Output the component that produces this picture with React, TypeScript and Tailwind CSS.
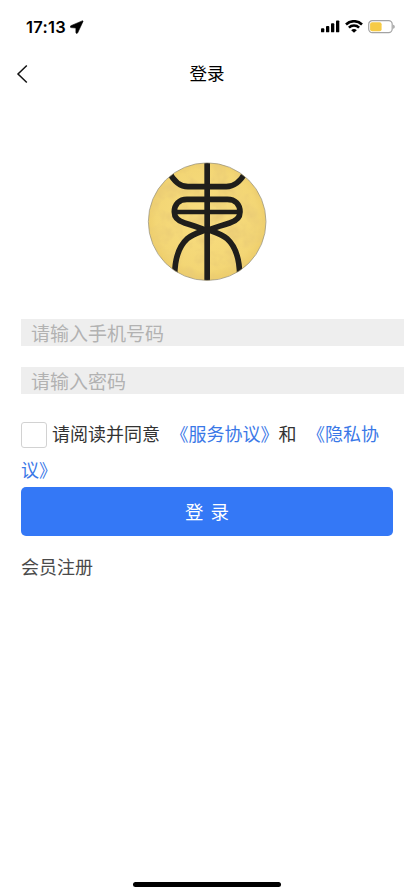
import React from "react";

function StatusBar() {
  return (
    <div className="flex h-[52px] items-center justify-between pl-[26px] pr-[18px] pt-[1px]">
      <div className="flex items-center gap-[4px]">
        <span className="w-[40px] whitespace-nowrap font-['Inter','Liberation_Sans',sans-serif] text-[16.500px] font-semibold leading-5 tracking-[0.300px] text-black">17:13</span>
        <svg width="14" height="14" viewBox="0 0 14 14" className="block">
          <path d="M12.200 0.900 0.900 5.700C-.1 6.200.1 7.500 1.100 7.600L5.900 8V12.500C6 13.600 7.300 13.700 7.700 12.800L12.900 1.700C13.200 1 12.800.6 12.200.9Z" fill="#000" stroke="#000" strokeWidth="0.600" />
        </svg>
      </div>
      <div className="flex items-center">
        <svg width="19" height="13" viewBox="0 0 19 13" className="block">
          <rect x="0" y="8.300" width="3.300" height="4" rx="0.900" />
          <rect x="5" y="6" width="3.300" height="6.300" rx="0.900" />
          <rect x="10" y="3.300" width="3.300" height="9" rx="0.900" />
          <rect x="15" y="0.400" width="3.300" height="11.900" rx="0.900" />
        </svg>
        <svg width="18" height="13" viewBox="0 0 18 13" className="ml-[5px] block">
          <g fill="none" stroke="#000" strokeWidth="2.500">
            <path d="M1 4.500a11.300 11.300 0 0 1 16 0" />
            <path d="M3.900 7.700a7.200 7.200 0 0 1 10.200 0" />
          </g>
          <path d="M9 12.800 6.200 10.200a3.900 3.900 0 0 1 5.600 0Z" />
        </svg>
        <svg width="28" height="14" viewBox="0 0 28 14" className="ml-[5px] block">
          <rect x="0.700" y="0.700" width="23.500" height="12" rx="3.600" fill="#fff" stroke="#a3a3a3" strokeWidth="1.200" />
          <rect x="2.100" y="2.200" width="11.500" height="9" rx="2" fill="#f6cb46" />
          <path d="M25.300 4.800v4c.9-.4 1.300-1.100 1.300-2s-.4-1.600-1.300-2Z" fill="#8c8c8c" />
        </svg>
      </div>
    </div>
  );
}

function Logo() {
  return (
    <svg width="140" height="140" viewBox="0 0 420 420" className="block">
      <defs>
        <clipPath id="disc">
          <circle cx="210.500" cy="209" r="176" />
        </clipPath>
        <radialGradient id="gold" cx="50%" cy="48%" r="52%">
          <stop offset="0" stopColor="#f8dd80" />
          <stop offset="0.700" stopColor="#f3d675" />
          <stop offset="1" stopColor="#e6c25e" />
        </radialGradient>
        <filter id="grain" x="0" y="0" width="100%" height="100%">
          <feTurbulence type="fractalNoise" baseFrequency="0.022" numOctaves="4" seed="5" />
          <feColorMatrix values="0 0 0 0 0.820  0 0 0 0 0.600  0 0 0 0 0.180  2.200 0 0 0 -0.900" />
        </filter>
      </defs>
      <g clipPath="url(#disc)">
        <rect width="420" height="420" fill="url(#gold)" />
        <rect width="420" height="420" filter="url(#grain)" />
        <g fill="none" stroke="#1f1e1b" strokeWidth="17">
          <path d="M210.500 20V400" />
          <path d="M96 60C111 89 129 104 153 104H268C292 104 310 89 326 60" />
          <path d="M210 236C184 226 164 219 143 213C123 207 112 195 112 180C112 157 127 142 150 142H271C294 142 309 157 309 180C309 195 298 207 278 213C257 219 237 226 210 236" />
          <path d="M112 180H309" strokeWidth="13" />
          <path d="M113 380C112 330 122 286 151 260C168 245 191 240 210.500 232C230 240 253 245 270 260C299 286 309 330 308 380" />
        </g>
      </g>
      <circle cx="210.500" cy="209" r="176.500" fill="none" stroke="#8e8a78" strokeWidth="2" />
    </svg>
  );
}

export default function App() {
  return (
    <main className="flex h-[896px] w-[414px] flex-col overflow-hidden bg-white font-['Noto_Sans_CJK_SC',sans-serif]">
      <StatusBar />
      <header className="grid h-[44px] grid-cols-3 items-center">
        <svg width="12" height="20" viewBox="0 0 12 20" className="ml-[16px] block">
          <path d="M10.800 1.500 2 10l8.800 8.500" fill="none" stroke="#111" strokeWidth="1.500" />
        </svg>
        <h1 className="pb-[2px] text-center text-[17.500px] leading-6 text-black">登录</h1>
      </header>

      <div className="mt-[56px] flex justify-center">
        <Logo />
      </div>

      <form className="ml-[21px] mt-[27.400px] flex flex-col">
        <input
          className="h-[27px] w-[383px] bg-[#eeeeee] px-[10px] text-[19px] leading-[26px] outline-none placeholder:text-[#b2b2b2]"
          placeholder="请输入手机号码"
        />
        <input
          type="password"
          className="mt-[21px] h-[27px] w-[383px] bg-[#eeeeee] px-[10px] text-[19px] leading-[26px] outline-none placeholder:text-[#b2b2b2]"
          placeholder="请输入密码"
        />
        <p className="mt-[20.600px] w-[372px] text-[18px] leading-[36px] text-[#333]">
          <span className="relative -top-px mr-[5px] inline-block size-[26px] rounded-[3px] border border-[#d2d2d2] bg-white align-middle" />
          <span>请阅读并同意</span>
          <a className="ml-[10.500px] text-[#3a78e7]">《服务协议》</a>
          <span>和</span>
          <a className="text-[#3a78e7]">
            <span className="ml-[10.500px]">《隐私协</span>
            <span className="block">议》</span>
          </a>
        </p>
        <button type="button" className="h-[49px] w-[372px] rounded-[5px] bg-[#3478f6] pb-[1px] text-[18.500px] leading-[48px] text-white [word-spacing:3px]">
          登 录
        </button>
        <a className="mt-[17px] text-[18px] leading-[26px] text-[#4a4a4a]">会员注册</a>
      </form>

      <div className="mb-[9px] ml-[133px] mt-auto h-[5px] w-[148px] rounded-full bg-black" />
    </main>
  );
}
